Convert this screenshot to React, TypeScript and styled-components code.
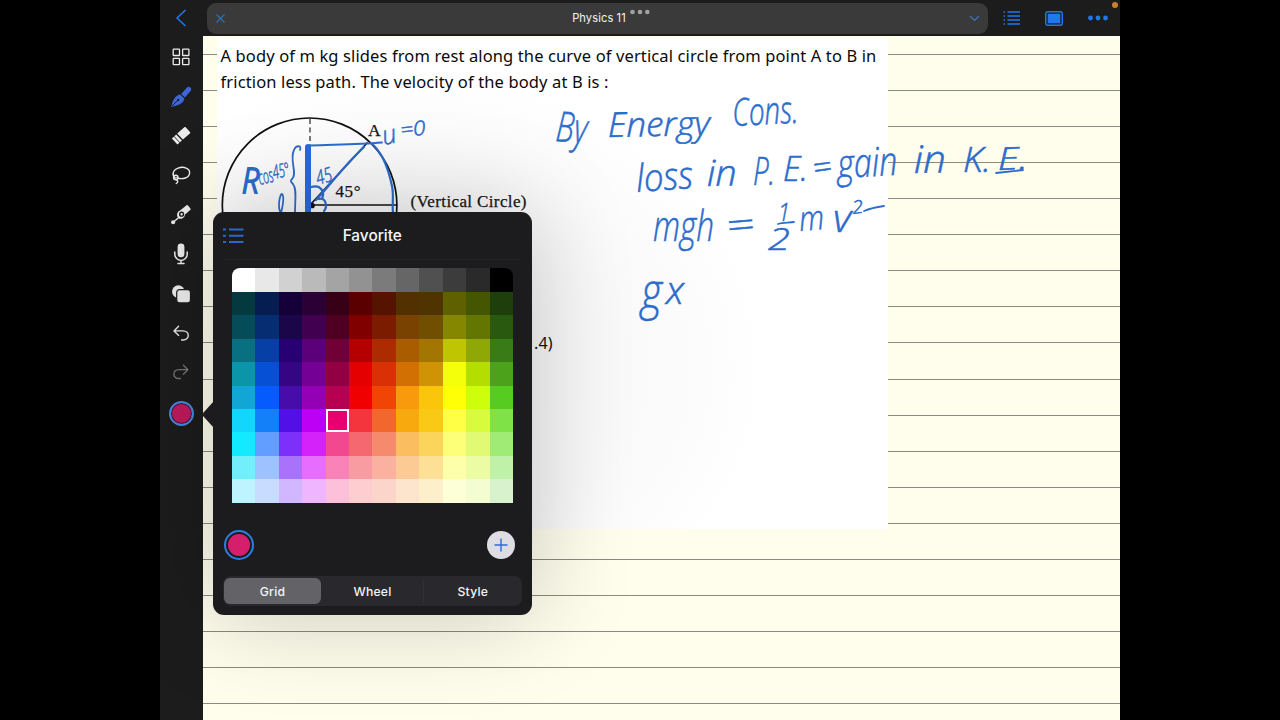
import React from "react";
import styled, { createGlobalStyle } from "styled-components";

const GlobalStyle = createGlobalStyle`
  * {
    box-sizing: border-box;
  }

  body {
    margin: 0;
    background: #000;
    overflow: hidden;
  }
`;

const INK = "#2c6ccb";
const BLUE = "#1f78ee";

const SWATCHES = [
  ["#ffffff", "#e8e8e8", "#d1d1d1", "#bababa", "#a4a4a4", "#929292", "#7b7b7b", "#666666", "#505050", "#3c3c3c", "#2a2a2a", "#000000"],
  ["#04393f", "#051d50", "#150039", "#2b0035", "#380017", "#5b0000", "#561400", "#533000", "#4f3400", "#5f6000", "#455600", "#1e3f0b"],
  ["#064c58", "#062c72", "#1b064a", "#410050", "#4f0022", "#800000", "#7b1c00", "#7a4200", "#705000", "#868700", "#637600", "#28590e"],
  ["#087080", "#063fa6", "#280073", "#5c007a", "#700035", "#b40000", "#ad2b00", "#aa5d00", "#a27600", "#bfc500", "#8fa806", "#397c17"],
  ["#0b95a9", "#0650d6", "#350584", "#740095", "#920043", "#e50000", "#da3005", "#d27003", "#cf9305", "#f4ff0a", "#b4dd00", "#4ca31b"],
  ["#12a6d5", "#065bff", "#480cab", "#9300b6", "#b80052", "#f00000", "#f14505", "#f99a0c", "#fac50b", "#ffff05", "#ceff0a", "#57cc20"],
  ["#13d6ff", "#1380fa", "#5310e6", "#bd00f5", "#e80070", "#f4353d", "#f1672e", "#f8a90e", "#fac915", "#ffff46", "#d8fb3e", "#7fe247"],
  ["#12ebff", "#629eff", "#7c30fa", "#d322fa", "#f1488f", "#f66870", "#f58b6c", "#fabe60", "#fbd45c", "#fdff78", "#e0fb73", "#a0eb76"],
  ["#73effc", "#9dc2ff", "#aa72fa", "#e66dff", "#f983b8", "#f99ca1", "#fab19f", "#fccb95", "#fde095", "#feffa9", "#ebfca4", "#bff2a8"],
  ["#bdf4ff", "#c8dcff", "#d0b7ff", "#efb6ff", "#fcc0da", "#fdcdd0", "#fcd5ca", "#fde4cc", "#feefcb", "#fdffd7", "#f4fdd2", "#d8f2cd"],
];

const TABS = ["Grid", "Wheel", "Style"];

interface Word {
  text: string;
  x: number;
  y: number;
  size: number;
  width: number;
  tilt?: number;
}

const WORDS: Word[] = [
  { text: "By", x: 555, y: 141, size: 42, width: 31, tilt: 5 },
  { text: "Energy", x: 608, y: 137, size: 34, width: 102, tilt: -1 },
  { text: "Cons.", x: 733, y: 126, size: 38, width: 66, tilt: -3 },
  { text: "loss", x: 637, y: 192, size: 38, width: 57, tilt: -4 },
  { text: "in", x: 707, y: 186, size: 36, width: 30, tilt: -1 },
  { text: "P.", x: 753, y: 185, size: 39, width: 22 },
  { text: "E.", x: 783, y: 181, size: 34, width: 25 },
  { text: "=", x: 814, y: 179, size: 31, width: 19, tilt: -8 },
  { text: "gain", x: 838, y: 178, size: 40, width: 60, tilt: -3 },
  { text: "in", x: 914, y: 173, size: 38, width: 32, tilt: -1 },
  { text: "K.", x: 963, y: 172, size: 34, width: 28 },
  { text: "E.", x: 998, y: 170, size: 31, width: 30, tilt: -2 },
  { text: "mgh", x: 653, y: 241, size: 43, width: 61 },
  { text: "=", x: 727, y: 238, size: 34, width: 28, tilt: -5 },
  { text: "1", x: 778, y: 221, size: 25, width: 12 },
  { text: "2", x: 768, y: 250, size: 32, width: 22 },
  { text: "m", x: 800, y: 231, size: 34, width: 25, tilt: -5 },
  { text: "v", x: 833, y: 232, size: 38, width: 18 },
  { text: "2", x: 853, y: 214, size: 18, width: 11, tilt: -8 },
  { text: "g", x: 641, y: 309, size: 50, width: 21 },
  { text: "x", x: 666, y: 304, size: 38, width: 18 },
  { text: "cos", x: 260, y: 185, size: 20, width: 15, tilt: -14 },
  { text: "45°", x: 274, y: 179, size: 19, width: 17, tilt: -12 },
  { text: "45", x: 318, y: 185, size: 20, width: 16, tilt: -16 },
  { text: "u", x: 384, y: 145, size: 26, width: 14, tilt: -12 },
  { text: "=0", x: 401, y: 137, size: 20, width: 25, tilt: -6 },
];

const Stage = styled.div`
  position: relative;
  display: flex;
  flex-direction: column;
  width: 960px;
  height: 720px;
  margin: 0 160px;
  background: #1c1c1d;
  font-family: Inter, "Liberation Sans", sans-serif;
  overflow: hidden;
`;

const TopBar = styled.header`
  display: flex;
  align-items: center;
  flex: none;
  height: 36px;
  padding: 0 11px 0 15px;
`;

const TitleTab = styled.div`
  position: relative;
  display: flex;
  align-items: center;
  justify-content: space-between;
  flex: none;
  width: 781px;
  height: 31px;
  margin: 0 15px 0 20px;
  padding: 0 8px 0 9px;
  border-radius: 9px;
  background: #3a3a3a;
`;

const Title = styled.div`
  padding-left: 4px;
  color: #f2f2f2;
  font-size: 11.1px;
  letter-spacing: 0.1px;
`;

const Multitask = styled.svg`
  position: absolute;
  left: 421px;
  top: 6px;
`;

const RecordDot = styled.div`
  position: absolute;
  top: 2px;
  right: 2px;
  width: 6px;
  height: 6px;
  border-radius: 50%;
  background: #c98232;
`;

const TopActions = styled.div`
  display: flex;
  align-items: center;
  justify-content: space-between;
  flex: none;
  width: 106px;
`;

const Workspace = styled.div`
  display: flex;
  flex: 1;
  min-height: 0;
`;

const Sidebar = styled.nav`
  display: flex;
  flex-direction: column;
  align-items: center;
  flex: none;
  width: 43px;
  padding: 1.5px 1px 0 0;
`;

const Tool = styled.div`
  display: flex;
  align-items: center;
  justify-content: center;
  height: 39.4px;
  width: 100%;
`;

const ActiveColor = styled.div`
  width: 25px;
  height: 25px;
  margin-top: 9px;
  border: 2px solid #3e8be0;
  border-radius: 50%;
  background: #be1a5c;
  box-shadow: inset 0 0 0 1px #301c38;
`;

const Paper = styled.main`
  position: relative;
  flex: 1;
  padding: 2px 0 0 14px;
  background: repeating-linear-gradient(
      to bottom,
      transparent 0,
      transparent 18px,
      #8b8a80 18px,
      #8b8a80 19px,
      transparent 19px,
      transparent 36.06px
    )
    #fffdec;
`;

const Problem = styled.section`
  width: 671px;
  height: 491px;
  padding: 5px 0 0 3.5px;
  background: radial-gradient(ellipse 360px 300px at 190px 330px, #f6f6f8 0%, #f9f9fa 60%, #fff 100%);
`;

const Statement = styled.p`
  margin: 0;
  color: #0a0a0a;
  font-family: "Noto Sans", sans-serif;
  font-size: 16.5px;
  line-height: 26px;
  white-space: nowrap;
`;

const Line = styled.span<{ $spacing: number }>`
  display: block;
  letter-spacing: ${({ $spacing }) => $spacing}px;
`;

const Drawing = styled.svg`
  position: absolute;
  left: 0;
  top: 0;
`;

const InkText = styled.text`
  fill: ${INK};
  stroke: ${INK};
  stroke-width: 0.55px;
  font-family: "Open Sans", "Noto Sans", sans-serif;
  font-style: italic;
  font-weight: 300;
`;

const InkInitial = styled(InkText)`
  stroke-width: 2px;
`;

const SerifText = styled.text`
  fill: #151515;
  stroke: #151515;
  stroke-width: 0.25px;
  font-family: "Liberation Serif", serif;
`;

const Popover = styled.div`
  position: absolute;
  left: 53px;
  top: 212px;
  display: flex;
  flex-direction: column;
  width: 318.5px;
  height: 403px;
  padding: 0 10px 9px;
  border-radius: 11px;
  background: #1c1c1e;
  box-shadow: 0 0 100px rgba(0, 0, 0, 0.22);
`;

const PopoverArrow = styled.svg`
  position: absolute;
  left: -11px;
  top: 189px;
`;

const PopoverHeader = styled.div`
  display: grid;
  grid-template-columns: 40px 1fr 40px;
  align-items: center;
  height: 48px;
  margin-bottom: 8.4px;
  border-bottom: 1px solid #222224;
`;

const PopoverTitle = styled.div`
  color: #f7f7f7;
  font-size: 15.4px;
  font-weight: 500;
  text-align: center;
`;

const Swatches = styled.div`
  display: grid;
  grid-template-columns: repeat(12, 1fr);
  grid-template-rows: repeat(10, 1fr);
  flex: none;
  width: 281px;
  height: 234.4px;
  margin-left: 9px;
  border-radius: 8px 8px 0 0;
  overflow: hidden;
`;

const Swatch = styled.div<{ $color: string; $selected: boolean }>`
  background: ${({ $color }) => $color};
  ${({ $selected }) => $selected && "outline: 2px solid #fff; outline-offset: -2px; z-index: 1;"}
`;

const Favorites = styled.div`
  display: flex;
  align-items: center;
  justify-content: space-between;
  flex: 1;
  padding: 11px 7px 0 1px;
`;

const FavoriteColor = styled.div`
  width: 30px;
  height: 30px;
  padding: 2px;
  border: 2px solid #2b7de6;
  border-radius: 50%;
  background: #d51f6c;
  background-clip: content-box;
`;

const AddColor = styled.div`
  display: flex;
  align-items: center;
  justify-content: center;
  width: 28px;
  height: 28px;
  border-radius: 50%;
  background: #dddde3;
`;

const Segments = styled.div`
  display: grid;
  grid-template-columns: 97px 103px 1fr;
  flex: none;
  height: 30px;
  padding: 2px 0 2px 1px;
  border-radius: 8px;
  background: #29292d;
`;

const Segment = styled.div<{ $active: boolean; $divided: boolean }>`
  display: flex;
  align-items: center;
  justify-content: center;
  border-radius: ${({ $active }) => ($active ? "6px" : "0")};
  background: ${({ $active }) => ($active ? "#636267" : "transparent")};
  box-shadow: ${({ $divided }) => ($divided ? "-1px 0 0 -0.5px #39393d" : "none")};
  color: #f4f4f4;
  font-size: 12.2px;
  font-weight: 500;
  letter-spacing: 0.2px;
`;

function Icon({ size = 22, children }: { size?: number; children: React.ReactNode }) {
  return (
    <svg
      width={size}
      height={size}
      viewBox="0 0 22 22"
      fill="none"
      stroke="#ebebeb"
      strokeWidth="1.4"
      strokeLinecap="round"
      strokeLinejoin="round"
    >
      {children}
    </svg>
  );
}

function Tools() {
  return (
    <>
      <Tool>
        <Icon>
          <g strokeWidth="1.3">
            <rect x="3.2" y="3.2" width="6.3" height="6.3" rx="0.6" />
            <rect x="12.6" y="3.2" width="6.3" height="6.3" rx="0.6" />
            <rect x="3.2" y="12.4" width="6.3" height="6.3" rx="0.6" />
            <rect x="12.6" y="12.4" width="6.3" height="6.3" rx="0.6" />
          </g>
        </Icon>
      </Tool>
      <Tool>
        <Icon>
          <path d="M11.2 7.9 17 1.4C18.6-.1 22.2 1.8 21 4.4L14.9 11.4Z" fill="#3d67d8" stroke="none" />
          <path d="M10.2 8.6 14.3 12.4C13.5 16.4 10.5 18.9 1.2 20.8 2.9 13.7 5 9.8 10.2 8.6Z" fill="#3d67d8" stroke="none" />
          <path d="m2.2 19.9 5-5" stroke="#1c1c1d" strokeWidth="1" />
          <circle cx="8.2" cy="14" r="1.2" fill="#1c1c1d" stroke="none" />
        </Icon>
      </Tool>
      <Tool>
        <Icon>
          <path d="m7.2 8.5 7.1-6.2c.6-.5 1.1-.5 1.6.1l4.1 4.7c.4.5.4 1-.1 1.4l-7 6.1Z" fill="#ebebeb" stroke="none" />
          <path d="m6.2 9.4 5.7 6.1-4.5 4-5.5-6.1Z" fill="#ebebeb" stroke="none" />
          <path d="m4.2 11.5 5.4 5.9" stroke="#1c1c1d" strokeWidth=".9" />
        </Icon>
      </Tool>
      <Tool>
        <Icon>
          <path d="M5.6 14C1.7 11.8 2.2 6.5 8.1 4.2c5.5-2.2 12 .2 11.5 5-.5 4.5-6.7 6.7-12.8 4.6" />
          <circle cx="5.8" cy="13.4" r="2.2" />
          <path d="M3.7 13.8c-.4 2.4 3.5 1.2 4 3.2.3 1.2-.5 2-1.4 2.4" />
        </Icon>
      </Tool>
      <Tool>
        <Icon>
          <path
            d="m10 6.4 6.3-5c.7-.5 1.2-.4 1.7.2l2.4 2.8c.5.6.4 1.1-.2 1.6l-5.4 4.8c.2 2.6-2.6 4.6-5.6 3.9L7.6 13c-1.2-2.7-.2-5.5 2.4-6.6Z"
            fill="#ebebeb"
            stroke="none"
          />
          <circle cx="11.6" cy="10.2" r="1.9" fill="#ebebeb" stroke="#1c1c1d" strokeWidth="1.4" />
          <path d="m8.4 13.8-4.2 3.7" />
          <circle cx="3.1" cy="18.2" r="2" fill="#ebebeb" stroke="none" />
        </Icon>
      </Tool>
      <Tool>
        <Icon>
          <rect x="7.6" y=".4" width="6.8" height="13.8" rx="3.4" fill="#ebebeb" stroke="none" />
          <path d="M4.8 9v2.2a6.2 6.2 0 0 0 12.4 0V9M11 17.4v3M8 20.4h6" strokeWidth="1.5" />
        </Icon>
      </Tool>
      <Tool>
        <Icon>
          <circle cx="8.3" cy="8.6" r="6.3" fill="#ebebeb" stroke="none" />
          <rect x="6.7" y="6.6" width="13.8" height="13.3" rx="2.8" fill="#ebebeb" stroke="#1c1c1d" strokeWidth="1.2" />
        </Icon>
      </Tool>
      <Tool>
        <Icon>
          <path d="M8.6 4.3 4 8.9l4.7 4.5M4.3 8.9h8.5c7.3.2 7.2 9.1.2 9.1h-1.4" strokeWidth="1.35" />
        </Icon>
      </Tool>
      <Tool>
        <Icon>
          <path d="m13.4 4.2 4.5 4.5-4.5 4.5M17.6 8.7H9.2C2.1 8.9 2.1 17.5 9 17.5h1.4" stroke="#747474" strokeWidth="1.3" />
        </Icon>
      </Tool>
    </>
  );
}

function Canvas() {
  return (
    <Drawing width="917" height="684" viewBox="203 36 917 684" fill="none" strokeLinecap="round">
      <g stroke="#111" strokeWidth="1.7">
        <circle cx="309.6" cy="205.3" r="87.3" />
        <path d="M310 119v26" strokeWidth="1.1" strokeDasharray="5 3.5" strokeLinecap="butt" />
        <path d="M312 205h84M311 204l56-61" />
        <circle cx="312" cy="205.5" r="2" fill="#111" />
      </g>
      <SerifText x="368" y="136" fontSize="17.5">A</SerifText>
      <SerifText x="335.5" y="197" fontSize="17" textLength="25">45°</SerifText>
      <SerifText x="410.5" y="207" fontSize="17" textLength="116">(Vertical Circle)</SerifText>
      <text x="534" y="349" fontSize="16" fontFamily="Noto Sans" fill="#111" textLength="18.5">.4)</text>

      <g stroke={INK} strokeWidth="1.8">
        <path d="M308 147v66" stroke="#2969df" strokeWidth="6" />
        <path d="M310 145.5c25-1 48-1 72-3" />
        <path d="M364 147c-18 17-31 34-48 53" strokeWidth="2.4" />
        <path d="M371 143c13 10 18 29 21 43 2 9 0 18 1 27" strokeWidth="2.2" />
        <path d="M300 150c2-5-4-5-6 0-5 10 4 24-2 29-2 2-1 3 1 5 4 5 2 15 2 29" />
        <path d="M311 187c10-3 14 5 11 12M319 199c8-2 8 9 5 12" strokeWidth="2.2" />
        <path d="M281 213c-4-5-1-20 1-19 2 2 1 11-1 19" />
        <path d="M778 224c5-2 11-1 16-2" />
        <path d="M864 211c7-3 13-4 20-5" />
        <path d="M996 173c9-1 18-2 27-3" />
      </g>
      <InkInitial x="242" y="193" fontSize="35" textLength="17" lengthAdjust="spacingAndGlyphs">
        R
      </InkInitial>
      {WORDS.map(({ text, x, y, size, width, tilt = 0 }) => (
        <InkText
          key={`${text}-${x}`}
          x={x}
          y={y}
          fontSize={size}
          textLength={width}
          lengthAdjust="spacingAndGlyphs"
          transform={`rotate(${tilt} ${x} ${y})`}
        >
          {text}
        </InkText>
      ))}
    </Drawing>
  );
}

function ColorPopover() {
  return (
    <Popover>
      <PopoverArrow width="12" height="27" viewBox="0 0 12 27">
        <path d="M12 0v27L1.5 15.5Q0 13.5 1.5 11.5Z" fill="#1c1c1e" />
      </PopoverArrow>
      <PopoverHeader>
        <svg width="22" height="18" viewBox="0 0 22 18" fill="none" stroke="#2868c7" strokeWidth="2">
          <path d="M6 2.5h14.5M6 8.7h14.5M6 15h14.5M0 2.5H3M0 8.7H3M0 15H3" />
        </svg>
        <PopoverTitle>Favorite</PopoverTitle>
      </PopoverHeader>
      <Swatches>
        {SWATCHES.map((row, r) =>
          row.map((color, c) => <Swatch key={`${r}-${c}`} $color={color} $selected={r === 6 && c === 4} />)
        )}
      </Swatches>
      <Favorites>
        <FavoriteColor />
        <AddColor>
          <svg width="14" height="14" viewBox="0 0 14 14" stroke="#276edb" strokeWidth="1.4">
            <path d="M7 .5v13M.5 7h13" />
          </svg>
        </AddColor>
      </Favorites>
      <Segments>
        {TABS.map((tab, i) => (
          <Segment key={tab} $active={i === 0} $divided={i === 2}>
            {tab}
          </Segment>
        ))}
      </Segments>
    </Popover>
  );
}

export default function App() {
  return (
    <>
      <GlobalStyle />
      <Stage>
        <TopBar>
          <svg width="12" height="18" viewBox="0 0 12 18" fill="none" stroke={BLUE} strokeWidth="1.5">
            <path d="M10.5 1 2 9l8.5 8" />
          </svg>
          <TitleTab>
            <svg width="9" height="9" viewBox="0 0 9 9" stroke="#2f74bb" strokeWidth="1.1">
              <path d="m.5.5 8 8M8.5.5l-8 8" />
            </svg>
            <Title>Physics 11</Title>
            <Multitask width="22" height="6" fill="#a2a2a2">
              <circle cx="4.5" cy="3" r="2.3" />
              <circle cx="12" cy="3" r="2.3" />
              <circle cx="19.3" cy="3" r="2.3" />
            </Multitask>
            <svg width="11" height="7" viewBox="0 0 11 7" fill="none" stroke="#3478c0" strokeWidth="1.1">
              <path d="m1 1 4.5 4.5L10 1" />
            </svg>
          </TitleTab>
          <TopActions>
            <svg width="18" height="14" viewBox="0 0 18 14" fill="none" stroke={BLUE} strokeWidth="1.5">
              <path d="M4.5 1H17M4.5 5H17M4.5 9H17M4.5 13H17M.5 1H2M.5 5H2M.5 9H2M.5 13H2" />
            </svg>
            <svg width="18" height="15" viewBox="0 0 18 15" fill="none" stroke={BLUE} strokeWidth="1.4">
              <rect x=".7" y=".7" width="16.6" height="13.6" rx="2" />
              <rect x="2.7" y="2.7" width="12.6" height="9.6" fill={BLUE} stroke="none" />
            </svg>
            <svg width="22" height="6" viewBox="0 0 22 6" fill={BLUE}>
              <circle cx="3.5" cy="3" r="2.4" />
              <circle cx="11" cy="3" r="2.4" />
              <circle cx="18.5" cy="3" r="2.4" />
            </svg>
          </TopActions>
          <RecordDot />
        </TopBar>
        <Workspace>
          <Sidebar>
            <Tools />
            <ActiveColor />
          </Sidebar>
          <Paper>
            <Problem>
              <Statement>
                <Line $spacing={0.12}>
                  A body of m kg slides from rest along the curve of vertical circle from point A to B in
                </Line>
                <Line $spacing={0.13}>friction less path. The velocity of the body at B is :</Line>
              </Statement>
            </Problem>
            <Canvas />
          </Paper>
        </Workspace>
        <ColorPopover />
      </Stage>
    </>
  );
}
